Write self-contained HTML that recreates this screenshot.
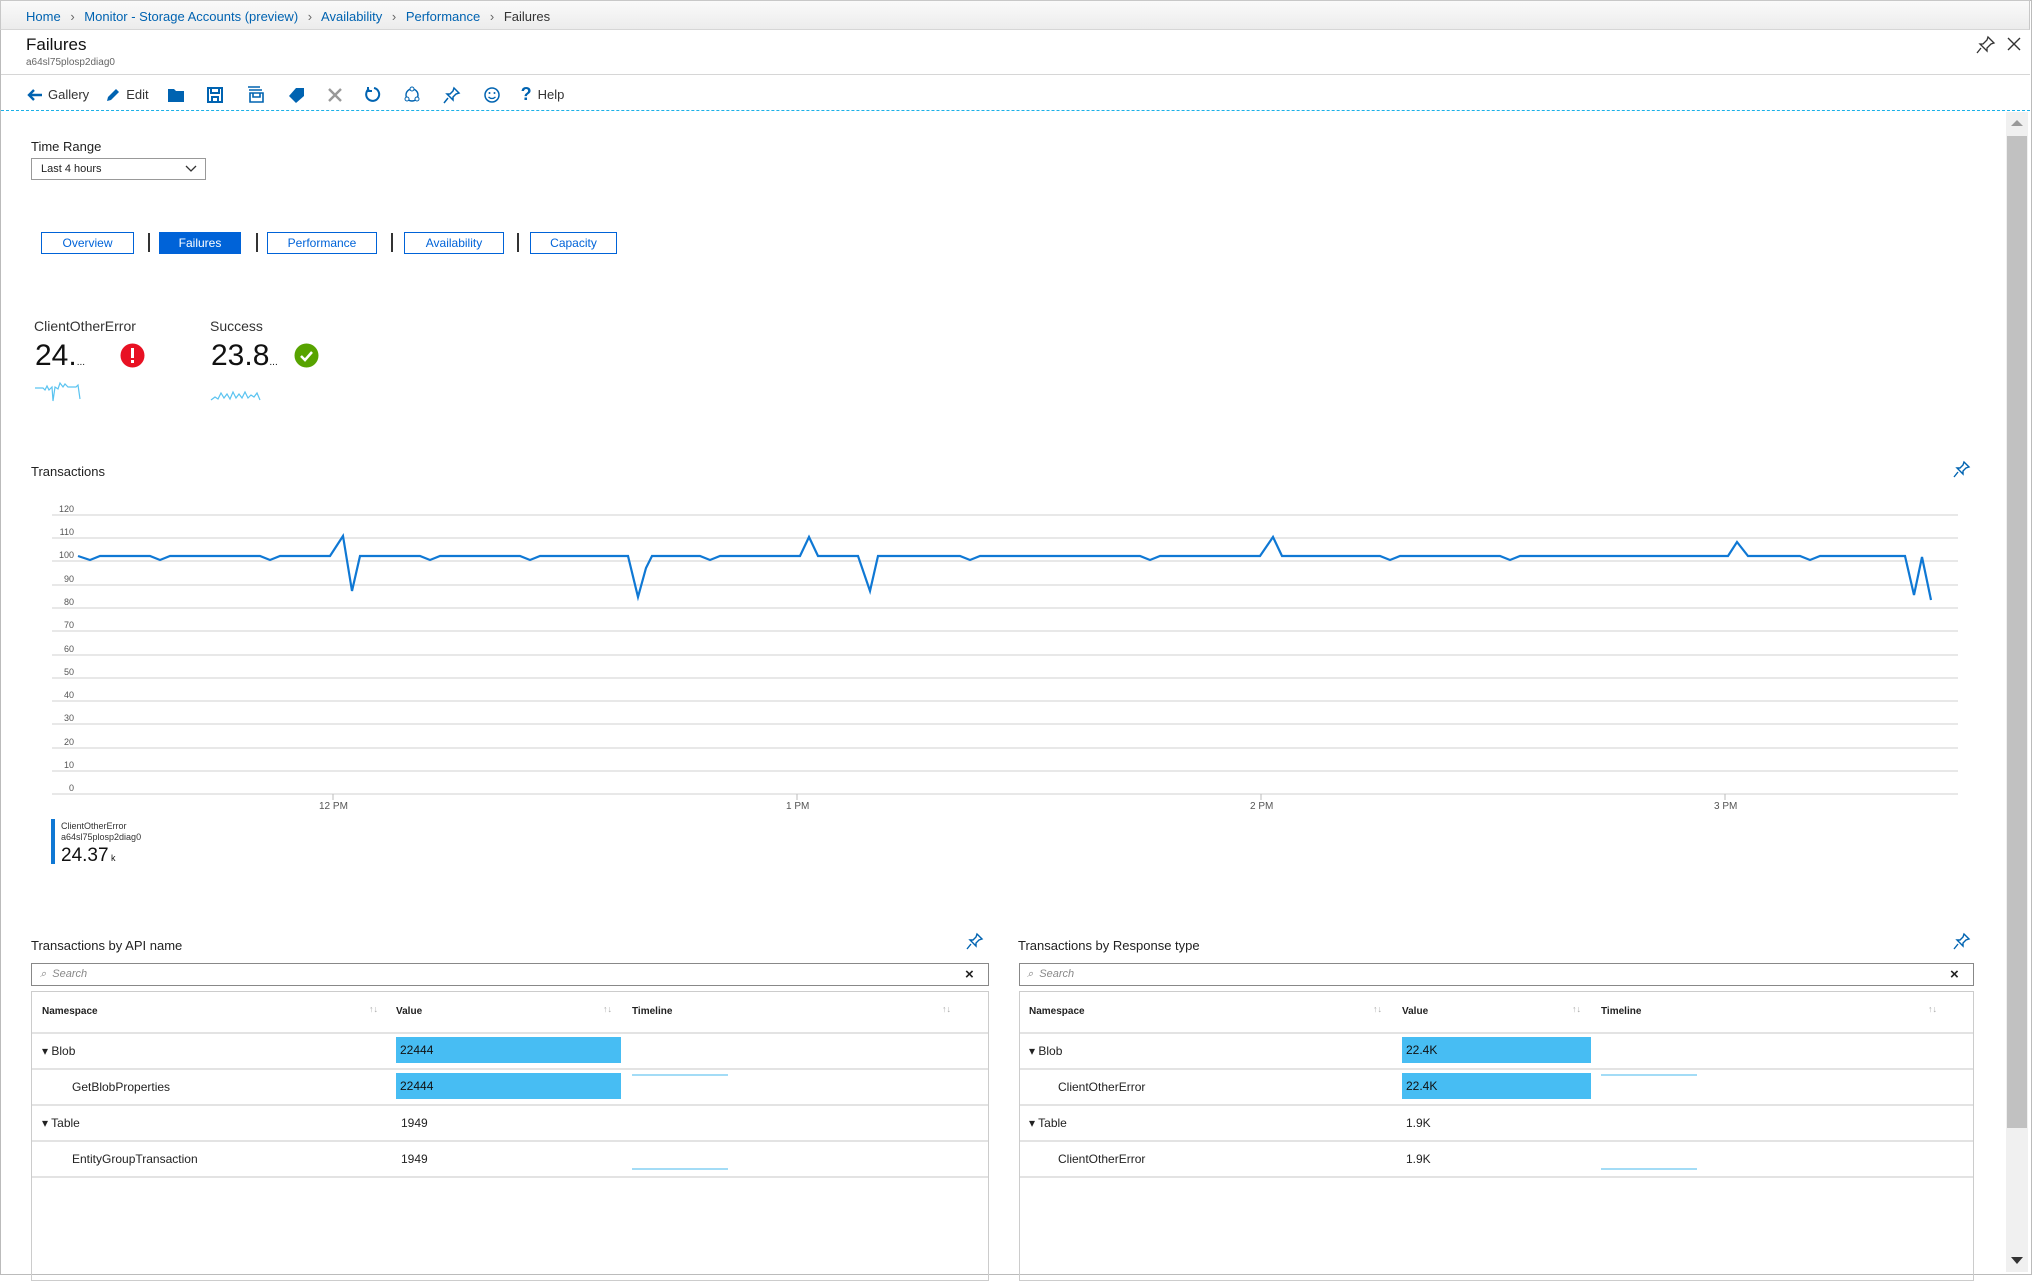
<!DOCTYPE html>
<html><head><meta charset="utf-8">
<style>
*{box-sizing:border-box;margin:0;padding:0}
body{width:2032px;height:1275px;overflow:hidden;background:#fff;font-family:"Liberation Sans",sans-serif;color:#222;position:relative}
.a{position:absolute;white-space:nowrap}
.bc{top:0;left:0;width:2030px;height:30px;background:linear-gradient(#fafafa,#ececec);border:1px solid #c8c8c8;border-bottom:1px solid #d6d6d6}
.lnk{color:#0063b1}
.tab{position:absolute;top:232px;height:22px;border:1px solid #0063d8;color:#0063d8;font-size:12px;text-align:center;line-height:20px;background:#fff}
.sep{position:absolute;top:233px;width:2px;height:19px;background:#333}
.yl{position:absolute;left:58px;font-size:9px;color:#555;width:16px;text-align:right}
.th{font-size:10px;font-weight:bold;color:#222}
.cell{font-size:12px;color:#222}
.bar{position:absolute;background:#47bdf3;height:26px;font-size:12px;line-height:26px;padding-left:4px;color:#111}
.rl{position:absolute;height:2px;background:#e3e3e3}
.srt{position:absolute;font-size:9px;color:#aaa}
</style></head><body>
<div style="position:absolute;left:0;top:0;width:2032px;height:1275px;border:1px solid #bbb"></div>
<div class="a bc"></div>
<div class="a" style="top:9px;left:26px;font-size:13px"><span class="lnk">Home</span> <span style="color:#666;margin:0 6px">›</span> <span class="lnk">Monitor - Storage Accounts (preview)</span> <span style="color:#666;margin:0 6px">›</span> <span class="lnk">Availability</span> <span style="color:#666;margin:0 6px">›</span> <span class="lnk">Performance</span> <span style="color:#666;margin:0 6px">›</span> <span style="color:#333">Failures</span></div>
<div class="a" style="top:35px;left:26px;font-size:17px;color:#111">Failures</div>
<div class="a" style="top:57px;left:26px;font-size:10px;color:#666">a64sl75plosp2diag0</div>
<div class="a" style="top:74px;left:1px;width:2029px;height:1px;background:#d6d6d6"></div>
<svg class="a" style="left:1975px;top:34px" width="22" height="22" viewBox="0 0 22 22"><path d="M13 3l6 6-3 1-4 4 0 3-7-7 3 0 4-4z M6 14l-4 5" fill="none" stroke="#333" stroke-width="1.3"/></svg>
<svg class="a" style="left:2006px;top:36px" width="16" height="16"><path d="M2 2L14 14M14 2L2 14" stroke="#333" stroke-width="1.4"/></svg>
<!-- toolbar -->
<div class="a" style="top:84px;left:26px;font-size:13px;color:#333;display:flex;align-items:center">
<svg width="18" height="16"><path d="M16 8H3M8 3L3 8l5 5" fill="none" stroke="#0063b1" stroke-width="2.4"/></svg><span style="margin-left:4px">Gallery</span>
<svg style="margin-left:16px" width="16" height="16"><path d="M2 14l1-4 8-8 3 3-8 8z" fill="#0063b1"/></svg><span style="margin-left:5px">Edit</span>
<svg style="margin-left:18px" width="18" height="16"><path d="M1 2h6l2 2h8v11H1z" fill="#0063b1"/></svg>
<svg style="margin-left:22px" width="16" height="16"><path d="M1 1h14v14H1z M4 1v5h8V1 M5 10h6v5H5z" fill="none" stroke="#0063b1" stroke-width="2"/></svg>
<svg style="margin-left:24px" width="18" height="17"><path d="M1 1h12M2 4h13M3 7h13v9H3z M6 7v4h7V7" fill="none" stroke="#0063b1" stroke-width="1.6"/></svg>
<svg style="margin-left:22px" width="18" height="16"><path d="M9 1h8v8l-8 7-7-7z" fill="#0063b1"/></svg>
<svg style="margin-left:22px" width="16" height="16"><path d="M2 2L14 14M14 2L2 14" stroke="#999" stroke-width="2.4"/></svg>
<svg style="margin-left:22px" width="16" height="18"><path d="M4 3a6.5 6.5 0 1 0 5 -1M3 1v4h4" fill="none" stroke="#0063b1" stroke-width="2"/></svg>
<svg style="margin-left:22px" width="18" height="18"><circle cx="9" cy="9" r="6" fill="none" stroke="#0063b1" stroke-width="1.4"/><circle cx="9" cy="3" r="2" fill="#fff" stroke="#0063b1"/><circle cx="4" cy="13" r="2" fill="#fff" stroke="#0063b1"/><circle cx="14" cy="13" r="2" fill="#fff" stroke="#0063b1"/></svg>
<svg style="margin-left:22px" width="18" height="18"><path d="M11 2l5 5-3 1-3 3 0 3-6-6 3 0 3-3z M5 12l-4 5" fill="none" stroke="#0063b1" stroke-width="1.5"/></svg>
<svg style="margin-left:22px" width="18" height="18"><circle cx="9" cy="9" r="7" fill="none" stroke="#0063b1" stroke-width="1.5"/><circle cx="6.5" cy="7" r="1" fill="#0063b1"/><circle cx="11.5" cy="7" r="1" fill="#0063b1"/><path d="M5.5 11q3.5 3 7 0" fill="none" stroke="#0063b1" stroke-width="1.3"/></svg>
<span style="margin-left:20px;color:#0063b1;font-weight:bold;font-size:18px">?</span><span style="margin-left:6px">Help</span>
</div>
<div class="a" style="top:110px;left:1px;width:2029px;border-top:1px dashed #1ab0e8"></div>
<!-- scrollbar -->
<div class="a" style="left:2006px;top:112px;width:22px;height:1160px;background:#f0f0f0"></div>
<div class="a" style="left:2007px;top:136px;width:20px;height:992px;background:#c1c1c1"></div>
<div class="a" style="left:2011px;top:120px;width:0;height:0;border:6px solid transparent;border-bottom:6px solid #999;border-top:0"></div>
<div class="a" style="left:2011px;top:1257px;width:0;height:0;border:6px solid transparent;border-top:7px solid #333;border-bottom:0"></div>
<!-- time range -->
<div class="a" style="top:139px;left:31px;font-size:13px">Time Range</div>
<div class="a" style="top:158px;left:31px;width:175px;height:22px;border:1px solid #999;font-size:11px;line-height:20px;padding-left:9px">Last 4 hours<svg style="position:absolute;right:8px;top:6px" width="12" height="8"><path d="M1 1l5 5 5-5" fill="none" stroke="#333" stroke-width="1.3"/></svg></div>
<!-- tabs -->
<div class="tab" style="left:41px;width:93px">Overview</div>
<div class="sep" style="left:148px"></div>
<div class="tab" style="left:159px;width:82px;background:#0063d8;color:#fff">Failures</div>
<div class="sep" style="left:256px"></div>
<div class="tab" style="left:267px;width:110px">Performance</div>
<div class="sep" style="left:391px"></div>
<div class="tab" style="left:404px;width:100px">Availability</div>
<div class="sep" style="left:517px"></div>
<div class="tab" style="left:530px;width:87px">Capacity</div>
<!-- tiles -->
<div class="a" style="top:318px;left:34px;font-size:14px;color:#333">ClientOtherError</div>
<div class="a" style="top:339px;left:35px;font-size:30px;color:#111">24<span style="font-size:30px">.</span><span style="font-size:10px">...</span></div>
<svg class="a" style="left:120px;top:343px" width="25" height="25"><circle cx="12.5" cy="12.5" r="12" fill="#e81123"/><rect x="11" y="5" width="3" height="10" fill="#fff"/><rect x="11" y="17" width="3" height="3" fill="#fff"/></svg>
<svg class="a" style="left:34px;top:380px" width="52" height="24"><path d="M1 8h8l2 2 2-4 2 4 3-3 1 14 2-14 3 2 2-6 3 4 2-3 3 3h8l2-2 2 14" fill="none" stroke="#5ac3f0" stroke-width="1.2"/></svg>
<div class="a" style="top:318px;left:210px;font-size:14px;color:#333">Success</div>
<div class="a" style="top:339px;left:211px;font-size:30px;color:#111">23.8<span style="font-size:10px">...</span></div>
<svg class="a" style="left:294px;top:343px" width="25" height="25"><circle cx="12.5" cy="12.5" r="12" fill="#57a300"/><path d="M7 13l4 4 7-8" fill="none" stroke="#fff" stroke-width="2.5"/></svg>
<svg class="a" style="left:210px;top:386px" width="52" height="18"><path d="M1 14l4-3 3 2 3-6 3 5 3-4 3 5 3-7 3 6 3-4 3 4 3-6 3 6 3-3 3 2 3-4 3 7" fill="none" stroke="#5ac3f0" stroke-width="1.2"/></svg>
<!-- transactions chart -->
<div class="a" style="top:464px;left:31px;font-size:13px;color:#222">Transactions</div>
<svg class="a" style="left:1953px;top:460px" width="18" height="18"><path d="M11 2l5 5-3 1-3 3 0 3-6-6 3 0 3-3z M5 12l-4 5" fill="none" stroke="#0063b1" stroke-width="1.4"/></svg>
<svg class="a" style="left:0;top:0" width="2000" height="830">
<g stroke="#e1e1e1" stroke-width="1.5">
<line x1="52" x2="1958" y1="515" y2="515"/><line x1="52" x2="1958" y1="538" y2="538"/><line x1="52" x2="1958" y1="561" y2="561"/><line x1="52" x2="1958" y1="585" y2="585"/><line x1="52" x2="1958" y1="608" y2="608"/><line x1="52" x2="1958" y1="631" y2="631"/><line x1="52" x2="1958" y1="655" y2="655"/><line x1="52" x2="1958" y1="678" y2="678"/><line x1="52" x2="1958" y1="701" y2="701"/><line x1="52" x2="1958" y1="724" y2="724"/><line x1="52" x2="1958" y1="748" y2="748"/><line x1="52" x2="1958" y1="771" y2="771"/><line x1="52" x2="1958" y1="794" y2="794"/>
</g>
<g stroke="#bbb"><line x1="333" x2="333" y1="794" y2="800"/><line x1="797" x2="797" y1="794" y2="800"/><line x1="1261" x2="1261" y1="794" y2="800"/><line x1="1725" x2="1725" y1="794" y2="800"/></g>
<polyline fill="none" stroke="#0f78d4" stroke-width="2.2" points="78,556 90,560 100,556 150,556 160,560 170,556 260,556 270,560 280,556 330,556 343,536 352,591 360,556 420,556 430,560 440,556 520,556 530,560 540,556 628,556 638,597 646,568 652,556 700,556 710,560 720,556 778,556 800,556 809,537 818,556 858,556 870,591 878,556 960,556 970,560 980,556 1140,556 1150,560 1160,556 1260,556 1273,537 1282,556 1380,556 1390,560 1400,556 1500,556 1510,560 1520,556 1728,556 1737,542 1748,556 1800,556 1810,560 1820,556 1905,556 1914,595 1922,557 1931,600"/>
</svg>
<div class="yl" style="top:504px">120</div><div class="yl" style="top:527px">110</div><div class="yl" style="top:550px">100</div><div class="yl" style="top:574px">90</div><div class="yl" style="top:597px">80</div><div class="yl" style="top:620px">70</div><div class="yl" style="top:644px">60</div><div class="yl" style="top:667px">50</div><div class="yl" style="top:690px">40</div><div class="yl" style="top:713px">30</div><div class="yl" style="top:737px">20</div><div class="yl" style="top:760px">10</div><div class="yl" style="top:783px">0</div>
<div class="a" style="top:801px;left:319px;font-size:10px;color:#555">12 PM</div>
<div class="a" style="top:801px;left:786px;font-size:10px;color:#555">1 PM</div>
<div class="a" style="top:801px;left:1250px;font-size:10px;color:#555">2 PM</div>
<div class="a" style="top:801px;left:1714px;font-size:10px;color:#555">3 PM</div>
<div class="a" style="left:51px;top:819px;width:4px;height:45px;background:#0f78d4"></div>
<div class="a" style="left:61px;top:821px;font-size:9px;color:#333;line-height:11px">ClientOtherError<br>a64sl75plosp2diag0</div>
<div class="a" style="left:61px;top:845px;font-size:19px;color:#111">24.37<span style="font-size:9px"> k</span></div>
<!-- left table panel -->
<div class="a" style="top:938px;left:31px;font-size:13px">Transactions by API name</div>
<svg class="a" style="left:966px;top:932px" width="18" height="18"><path d="M11 2l5 5-3 1-3 3 0 3-6-6 3 0 3-3z M5 12l-4 5" fill="none" stroke="#0063b1" stroke-width="1.4"/></svg>
<div class="a" style="left:31px;top:963px;width:958px;height:23px;border:1px solid #888"></div>
<div class="a" style="left:40px;top:968px;font-size:11px;font-style:italic;color:#888">⌕&nbsp; Search</div>
<div class="a" style="left:965px;top:966px;font-size:15px;font-weight:bold">×</div>
<div class="a" style="left:31px;top:991px;width:958px;height:290px;border:1px solid #ccc"></div>
<div class="a th" style="left:42px;top:1006px">Namespace</div><div class="srt" style="left:369px;top:1004px">↑↓</div>
<div class="a th" style="left:396px;top:1006px">Value</div><div class="srt" style="left:603px;top:1004px">↑↓</div>
<div class="a th" style="left:632px;top:1006px">Timeline</div><div class="srt" style="left:942px;top:1004px">↑↓</div>
<div class="rl" style="left:32px;top:1032px;width:956px"></div>
<div class="rl" style="left:32px;top:1068px;width:956px"></div>
<div class="rl" style="left:32px;top:1104px;width:956px"></div>
<div class="rl" style="left:32px;top:1140px;width:956px"></div>
<div class="rl" style="left:32px;top:1176px;width:956px"></div>
<div class="a cell" style="left:42px;top:1044px">▾ Blob</div>
<div class="bar" style="left:396px;top:1037px;width:225px">22444</div>
<div class="a cell" style="left:72px;top:1080px">GetBlobProperties</div>
<div class="bar" style="left:396px;top:1073px;width:225px">22444</div>
<div class="a" style="left:632px;top:1074px;width:96px;height:2px;background:#a3dcf6"></div>
<div class="a cell" style="left:42px;top:1116px">▾ Table</div>
<div class="a cell" style="left:401px;top:1116px">1949</div>
<div class="a cell" style="left:72px;top:1152px">EntityGroupTransaction</div>
<div class="a cell" style="left:401px;top:1152px">1949</div>
<div class="a" style="left:632px;top:1168px;width:96px;height:2px;background:#a3dcf6"></div>
<!-- right table panel -->
<div class="a" style="top:938px;left:1018px;font-size:13px">Transactions by Response type</div>
<svg class="a" style="left:1953px;top:932px" width="18" height="18"><path d="M11 2l5 5-3 1-3 3 0 3-6-6 3 0 3-3z M5 12l-4 5" fill="none" stroke="#0063b1" stroke-width="1.4"/></svg>
<div class="a" style="left:1019px;top:963px;width:955px;height:23px;border:1px solid #888"></div>
<div class="a" style="left:1027px;top:968px;font-size:11px;font-style:italic;color:#888">⌕&nbsp; Search</div>
<div class="a" style="left:1950px;top:966px;font-size:15px;font-weight:bold">×</div>
<div class="a" style="left:1019px;top:991px;width:955px;height:290px;border:1px solid #ccc"></div>
<div class="a th" style="left:1029px;top:1006px">Namespace</div><div class="srt" style="left:1373px;top:1004px">↑↓</div>
<div class="a th" style="left:1402px;top:1006px">Value</div><div class="srt" style="left:1572px;top:1004px">↑↓</div>
<div class="a th" style="left:1601px;top:1006px">Timeline</div><div class="srt" style="left:1928px;top:1004px">↑↓</div>
<div class="rl" style="left:1020px;top:1032px;width:953px"></div>
<div class="rl" style="left:1020px;top:1068px;width:953px"></div>
<div class="rl" style="left:1020px;top:1104px;width:953px"></div>
<div class="rl" style="left:1020px;top:1140px;width:953px"></div>
<div class="rl" style="left:1020px;top:1176px;width:953px"></div>
<div class="a cell" style="left:1029px;top:1044px">▾ Blob</div>
<div class="bar" style="left:1402px;top:1037px;width:189px">22.4K</div>
<div class="a cell" style="left:1058px;top:1080px">ClientOtherError</div>
<div class="bar" style="left:1402px;top:1073px;width:189px">22.4K</div>
<div class="a" style="left:1601px;top:1074px;width:96px;height:2px;background:#a3dcf6"></div>
<div class="a cell" style="left:1029px;top:1116px">▾ Table</div>
<div class="a cell" style="left:1406px;top:1116px">1.9K</div>
<div class="a cell" style="left:1058px;top:1152px">ClientOtherError</div>
<div class="a cell" style="left:1406px;top:1152px">1.9K</div>
<div class="a" style="left:1601px;top:1168px;width:96px;height:2px;background:#a3dcf6"></div>
</body></html>
